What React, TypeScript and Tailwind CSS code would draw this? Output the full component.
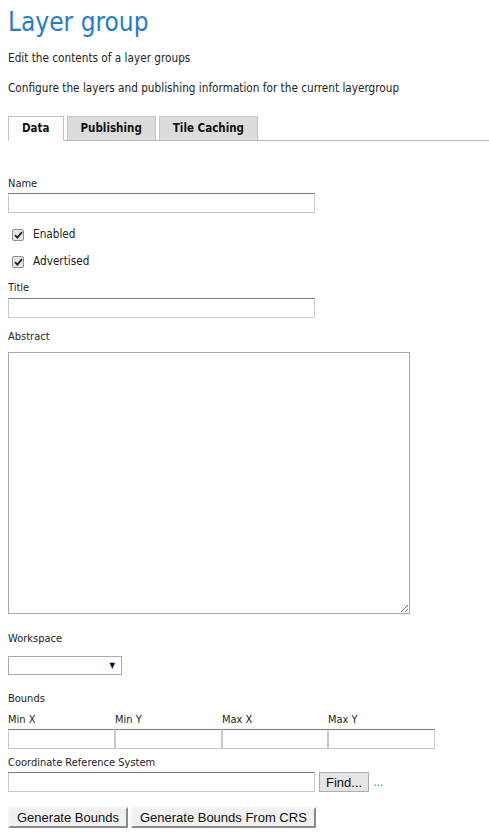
import { useState } from "react";

const font = { fontFamily: '"DejaVu Sans Condensed", "DejaVu Sans", sans-serif' };
const btnFont = { fontFamily: '"Liberation Sans", Arial, sans-serif' };

function Check({ label }: { label: string }) {
    return (
        <label className="flex items-center h-[16px] pl-[4px] gap-[9px] text-[11.7px] text-[#222]">
            <span className="w-[12px] h-[12px] border border-[#8f8f8f] bg-[#e6e6e6] rounded-[2px] flex items-center justify-center">
                <svg width="9" height="8" viewBox="0 0 9 8">
                    <path d="M1 4.2 L3.4 6.6 L8 1.2" stroke="#222" strokeWidth="1.8" fill="none" />
                </svg>
            </span>
            {label}
        </label>
    );
}

function Input({ className }: { className: string }) {
    return <div className={"h-[20px] bg-white border border-[#c9c9c9] border-t-[#7a7a7a] " + className}></div>;
}

export default function App() {
    const [tab] = useState("Data");
    const tabs = ["Data", "Publishing", "Tile Caching"];

    return (
        <div className="w-[489px] h-[837px] bg-white px-2 overflow-hidden" style={font}>
            <h1 className="h-[44px] leading-[44px] text-[26px] text-[#1e7ec8]">Layer group</h1>
            <p className="mt-[6px] h-[16px] leading-[16px] text-[11.7px] text-[#222]">Edit the contents of a layer groups</p>
            <p className="mt-[14px] h-[16px] leading-[16px] text-[11.7px] text-[#222]">Configure the layers and publishing information for the current layergroup</p>

            <div className="mt-[20px] flex gap-[3px] border-b border-[#bbbbbb] -mr-2 h-[25px]">
                {tabs.map((t) => (
                    <div
                        key={t}
                        className={
                            t === tab
                                ? "h-[25px] -mb-px px-[13px] flex items-center border border-b-0 border-[#c4c4c4] bg-white text-[11.5px] font-bold text-[#111]"
                                : "h-[24px] px-[13px] flex items-center border border-b-0 border-[#c4c4c4] bg-[#dcdcdc] text-[11.5px] font-bold text-[#111]"
                        }
                    >
                        {t}
                    </div>
                ))}
            </div>

            <div className="mt-[35px] h-[16px] leading-[16px] text-[11px] text-[#222]">Name</div>
            <Input className="mt-[1px] w-[307px]" />

            <div className="mt-[14px]"><Check label="Enabled" /></div>
            <div className="mt-[11px]"><Check label="Advertised" /></div>

            <div className="mt-[10px] h-[16px] leading-[16px] text-[11px] text-[#222]">Title</div>
            <Input className="mt-[2px] w-[307px]" />

            <div className="mt-[11px] h-[16px] leading-[16px] text-[11px] text-[#222]">Abstract</div>
            <textarea className="block mt-[7px] w-[402px] h-[262px] border border-[#a8a8a8] bg-white outline-none resize-y"></textarea>

            <div className="mt-[17px] h-[16px] leading-[16px] text-[11px] text-[#222]">Workspace</div>
            <div className="mt-[9px] w-[114px] h-[19px] border border-[#a9a9a9] bg-white flex items-center justify-end pr-[6px] text-[8px] text-[#111]">▼</div>

            <div className="mt-[16px] h-[16px] leading-[16px] text-[11px] text-[#222]">Bounds</div>
            <div className="mt-[5px] grid grid-cols-[107px_107px_106px_107px] w-[427px]">
                {["Min X", "Min Y", "Max X", "Max Y"].map((l) => (
                    <div key={l}>
                        <div className="h-[16px] leading-[16px] text-[11px] text-[#222]">{l}</div>
                        <Input className="mt-[1px] w-full" />
                    </div>
                ))}
            </div>

            <div className="mt-[6px] h-[16px] leading-[16px] text-[11px] text-[#222]">Coordinate Reference System</div>
            <div className="mt-[1px] flex items-center">
                <Input className="w-[307px]" />
                <button
                    className="ml-[4px] h-[20px] px-[6px] border border-[#adadad] bg-[#e5e5e5] text-[13px] text-[#111] leading-none"
                    style={btnFont}
                >
                    Find...
                </button>
                <span className="ml-[4px] text-[12px] text-[#1e7ec8]">...</span>
            </div>

            <div className="mt-[15px] flex gap-[3px]" style={btnFont}>
                <button className="h-[21px] px-[7px] border-2 border-[#f4f4f4] border-r-[#8a8a8a] border-b-[#8a8a8a] bg-[#f0f0f0] text-[13px] text-[#111] leading-none">
                    Generate Bounds
                </button>
                <button className="h-[21px] px-[7px] border-2 border-[#f4f4f4] border-r-[#8a8a8a] border-b-[#8a8a8a] bg-[#f0f0f0] text-[13px] text-[#111] leading-none">
                    Generate Bounds From CRS
                </button>
            </div>
        </div>
    );
}
